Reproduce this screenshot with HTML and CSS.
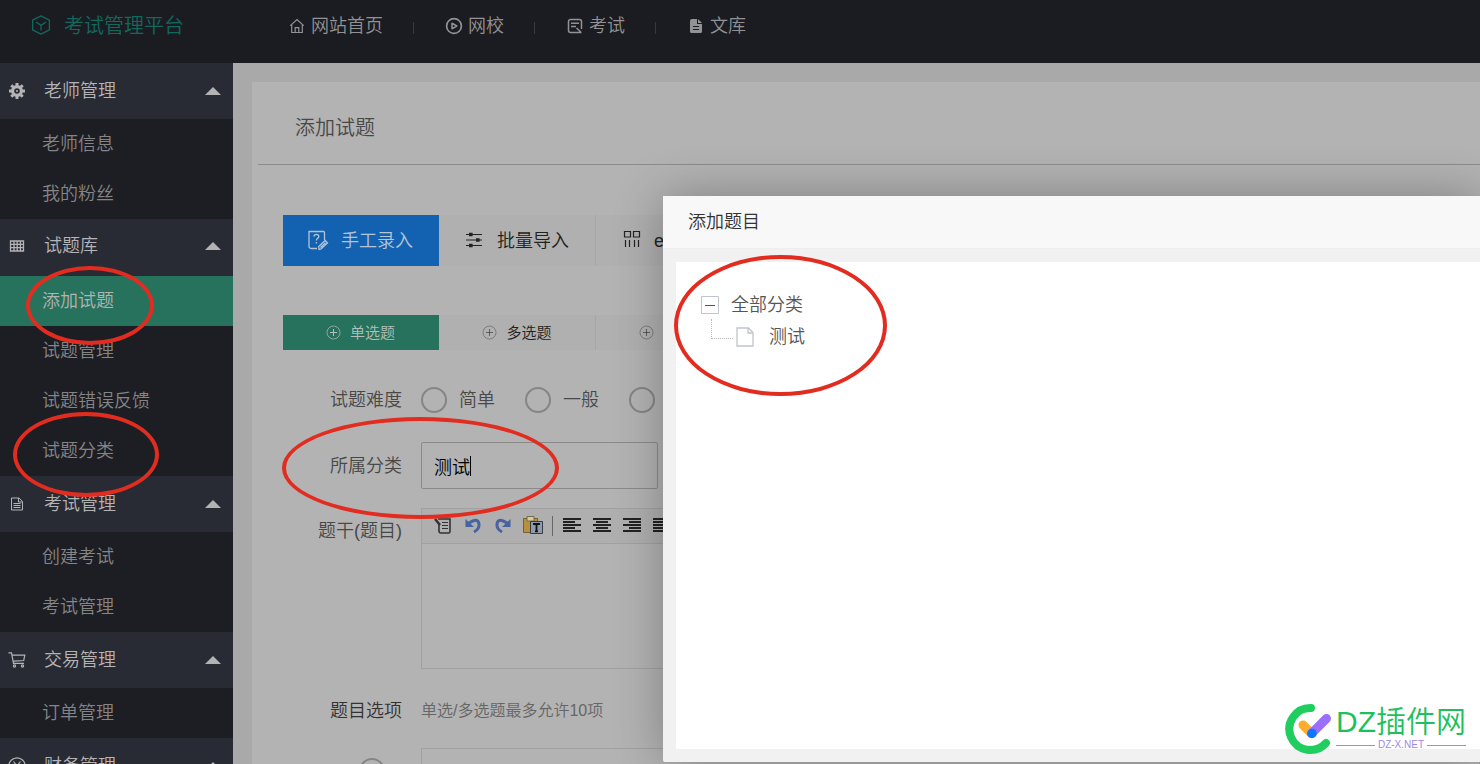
FILE: index.html
```html
<!DOCTYPE html>
<html lang="zh-CN">
<head>
<meta charset="utf-8">
<title>考试管理平台</title>
<link rel="stylesheet" href="styles.css">
</head>
<body>
<header class="topbar">
  <a class="brand" href="#">
    <svg width="20" height="20" viewBox="0 0 20 20" fill="none" stroke="currentColor" stroke-width="1.3" stroke-linejoin="round"><path d="M10 .8 18.4 5.2v9.6L10 19.2 1.6 14.8V5.2zM5 7l5 3.4L15 7M10 10.4v5"/></svg>
    <span>考试管理平台</span>
  </a>
  <nav class="topnav">
    <a href="#"><svg width="18" height="18" viewBox="0 0 18 18" fill="none" stroke="currentColor" stroke-width="1.2"><path d="M2.300 8.600 9 2.500l6.700 6.100M3.700 7.700v7.800h10.600V7.700M7.200 15.500v-4.800h3.600v4.800"/></svg>网站首页</a>
    <a href="#"><svg width="18" height="18" viewBox="0 0 18 18" fill="none" stroke="currentColor" stroke-width="1.7"><circle cx="9" cy="9" r="7.4"/><path d="M7 6.2v5.6L11.8 9z" stroke-linejoin="round" stroke-width="1.5"/></svg>网校</a>
    <a href="#"><svg width="18" height="18" viewBox="0 0 18 18" fill="none" stroke="currentColor" stroke-width="1.5"><path d="M10 15.500H4.500a2 2 0 0 1-2-2v-9a2 2 0 0 1 2-2h9a2 2 0 0 1 2 2V12M5 6.300h8M5 9.600h5M10.500 11l4.500 4.300M10 15.500h5.500"/></svg>考试</a>
    <a href="#"><svg width="18" height="18" viewBox="0 0 18 18"><path fill="currentColor" d="M5 2h5v5h5v7.500a1.500 1.500 0 0 1-1.500 1.500h-9A1.500 1.500 0 0 1 3 14.500V4a2 2 0 0 1 2-2zm6 0 4 4h-4z"/><path stroke="#1b1c21" d="M6 9.500h6M6 12.500h6"/></svg>文库</a>
  </nav>
</header>

<div class="shell">
  <aside class="sidebar">
    <button class="group" type="button"><svg width="18" height="18" viewBox="0 0 18 18" fill="none" stroke="currentColor"><circle cx="9" cy="9" r="4.400" stroke-width="3.200"/><path stroke-width="3" d="M9 1v3M9 14v3M1 9h3M14 9h3M3.300 3.300l2 2M12.700 12.700l2 2M3.300 14.700l2-2M12.700 5.300l2-2"/><circle cx="9" cy="9" r="1" fill="currentColor" stroke="none"/></svg><span>老师管理</span></button>
    <a class="item" href="#">老师信息</a>
    <a class="item" href="#">我的粉丝</a>
    <button class="group group-open" type="button"><svg width="18" height="18" viewBox="0 0 18 18" fill="none" stroke="currentColor" stroke-width="1.300"><path d="M2.500 4h13v10h-13zM2.500 7.300h13M2.500 10.600h13M6 4v10M9.200 4v10M12.400 4v10"/></svg><span>试题库</span></button>
    <a class="item item-active" href="#">添加试题</a>
    <a class="item" href="#">试题管理</a>
    <a class="item" href="#">试题错误反馈</a>
    <a class="item" href="#">试题分类</a>
    <button class="group" type="button"><svg width="18" height="18" viewBox="0 0 18 18" fill="none" stroke="currentColor"><path d="M3.500 3h7.500l3.500 3.500V15h-11zM10.500 3v4h4M5.500 8.500h7M5.500 10.500h7M5.500 12.500h7"/></svg><span>考试管理</span></button>
    <a class="item" href="#">创建考试</a>
    <a class="item" href="#">考试管理</a>
    <button class="group" type="button"><svg width="18" height="18" viewBox="0 0 18 18" fill="none" stroke="currentColor" stroke-width="1.200"><path d="M.500 1.800h3l2 10.500H16M4 4.200h12.800L15.700 9.500l-10.500.700"/><circle cx="6.500" cy="15" r="1.100"/><circle cx="14.500" cy="15" r="1.100"/></svg><span>交易管理</span></button>
    <a class="item" href="#">订单管理</a>
    <button class="group" type="button"><svg width="18" height="18" viewBox="0 0 18 18" fill="none" stroke="currentColor" stroke-width="1.200"><circle cx="9" cy="9" r="8.200"/><path d="M5.500 4.500 9 9l3.500-4.500M9 9v5M6 9.500h6M6 12h6"/></svg><span>财务管理</span></button>
  </aside>

  <main class="main">
    <section class="card">
      <h1 class="card-title">添加试题</h1>
      <div class="card-body">
        <div class="tabs">
          <button class="tab tab-on" type="button"><svg width="22" height="22" viewBox="0 0 22 22" fill="none" stroke="currentColor" stroke-width="1.300"><path d="M9 18.500H3a2 2 0 0 1-2-2V1.500h14.500a1 1 0 0 1 1 1V10M6 6.500q0-2.200 2.400-2.200t2.400 2.200c0 1.800-2.400 1.800-2.400 4M8.400 12v1.500M11 19.500l-.300-3 6.500-6 2.300 2.500-6.500 6zM12.500 17.500l5-4.700"/></svg>手工录入</button>
          <button class="tab" type="button"><svg width="22" height="22" viewBox="0 0 22 22" fill="currentColor" stroke="currentColor" stroke-width="1.200"><path d="M2 4.500h16M2 10h16M2 15.500h16"/><path stroke="none" d="M5 2.700h3.600v3.600H5zM12 8.200h3.600v3.600H12zM5 13.700h3.600v3.600H5z"/></svg>批量导入</button>
          <button class="tab" type="button"><svg width="22" height="22" viewBox="0 0 22 22" fill="none" stroke="currentColor" stroke-width="1.200"><path d="M3.500 1.500h6v5.500h-6zM12.500 1.500h6v5.500h-6zM4.500 10v7M8.500 10v7M13.500 10v7M17.500 10v7"/></svg>excel导入</button>
        </div>
        <div class="tabs tabs-small">
          <button class="tab tab-on" type="button"><svg width="15" height="15" viewBox="0 0 15 15" fill="none" stroke="currentColor"><circle cx="7.500" cy="7.500" r="6.500" opacity=".7"/><path d="M7.500 4v7M4 7.500h7"/></svg>单选题</button>
          <button class="tab" type="button"><svg width="15" height="15" viewBox="0 0 15 15" fill="none" stroke="currentColor"><circle cx="7.500" cy="7.500" r="6.500" opacity=".35"/><path d="M7.500 4v7M4 7.500h7" opacity=".55"/></svg>多选题</button>
          <button class="tab" type="button"><svg width="15" height="15" viewBox="0 0 15 15" fill="none" stroke="currentColor"><circle cx="7.500" cy="7.500" r="6.500" opacity=".35"/><path d="M7.500 4v7M4 7.500h7" opacity=".55"/></svg>判断题</button>
        </div>

        <form class="form">
          <div class="row">
            <span class="label">试题难度</span>
            <div class="radios">
              <label><input type="radio" name="level">简单</label>
              <label><input type="radio" name="level">一般</label>
              <label><input type="radio" name="level">困难</label>
            </div>
          </div>
          <div class="row">
            <label class="label" for="category">所属分类</label>
            <div class="field"><input class="text" id="category" type="text" value="测试"><i class="caret"></i></div>
          </div>
          <div class="row row-editor">
            <label class="label" for="stem">题干(题目)</label>
            <div class="editor">
              <div class="tools">
                <button type="button" aria-label="源代码"><svg width="20" height="20" viewBox="0 0 20 20" fill="none" stroke="#333" stroke-width="1.600"><path d="M5 3h12v12.500q0 1.500-1.500 1.500H8q-2 0-2-2V8"/><path stroke-width="2.500" d="m2 3 5 6"/><path stroke-width="1" d="M9 6.500h6M9 9.500h6M9 12.500h6"/></svg></button>
                <button type="button" aria-label="撤销"><svg width="20" height="20" viewBox="0 0 20 20"><path fill="none" stroke="#4763a0" stroke-width="3" d="M6 7q9-6 10 1 .500 5-5 8"/><path fill="#4763a0" d="M2.500 3v8H11z"/></svg></button>
                <button type="button" aria-label="重做"><svg width="20" height="20" viewBox="0 0 20 20"><path fill="none" stroke="#4763a0" stroke-width="3" d="M14 7Q5 1 4 8q-.500 5 5 8"/><path fill="#4763a0" d="M17.500 3v8H9z"/></svg></button>
                <button type="button" aria-label="粘贴为文本"><svg width="20" height="20" viewBox="0 0 20 20"><path fill="#b6903c" stroke="#7b6128" d="M.500 2.500h14v14H.500z"/><path fill="#dacb91" stroke="#6f6a58" d="M4 .500h7V5H4z"/><path fill="#8f9cab" stroke="#353b44" d="M7.500 5.500h12v12h-12z"/><path stroke="#111" stroke-width="1.800" d="M10 8h7M13.500 8v7.500M12 15.300h3"/></svg></button>
                <span class="split"></span>
                <button type="button" aria-label="左对齐"><svg width="20" height="20" viewBox="0 0 20 20" stroke="#222" stroke-width="2"><path d="M1 3h18M1 6h12M1 9h18M1 12h12M1 15h18"/></svg></button>
                <button type="button" aria-label="居中"><svg width="20" height="20" viewBox="0 0 20 20" stroke="#222" stroke-width="2"><path d="M1 3h18M4 6h12M1 9h18M4 12h12M1 15h18"/></svg></button>
                <button type="button" aria-label="右对齐"><svg width="20" height="20" viewBox="0 0 20 20" stroke="#222" stroke-width="2"><path d="M1 3h18M7 6h12M1 9h18M7 12h12M1 15h18"/></svg></button>
                <button type="button" aria-label="两端对齐"><svg width="20" height="20" viewBox="0 0 20 20" stroke="#222" stroke-width="2"><path d="M1 3h18M1 6h18M1 9h18M1 12h18M1 15h18"/></svg></button>
              </div>
              <textarea id="stem"></textarea>
            </div>
          </div>
          <div class="row row-hint">
            <span class="label">题目选项</span>
            <span class="hint">单选/多选题最多允许10项</span>
          </div>
          <div class="row row-option">
            <span class="label"><input type="radio" name="answer" aria-label="正确答案"></span>
            <textarea class="option" aria-label="选项内容"></textarea>
          </div>
        </form>
      </div>
    </section>
  </main>
</div>

<section class="dialog" role="dialog" aria-label="添加题目">
  <h2 class="dialog-title">添加题目</h2>
  <div class="dialog-body">
    <div class="tree">
      <div class="node"><svg width="18" height="18" viewBox="0 0 18 18" fill="none"><path stroke="#c0c4cc" d="M.500.500h17v17H.500z"/><path stroke="#555" d="M4 9.500h10"/></svg><a href="#">全部分类</a></div>
      <div class="node child"><svg width="18" height="20" viewBox="0 0 18 20" fill="none" stroke="#c0c4cc" stroke-width="1.300"><path d="M1 1h11.500L17 5.500V19H1zM12 1v5h5"/></svg><a href="#">测试</a></div>
    </div>
  </div>
</section>

<div class="ring ring-add"></div>
<div class="ring ring-class"></div>
<div class="ring ring-field"></div>
<div class="ring ring-tree"></div>

<div class="mark">
  <svg width="50" height="52" viewBox="0 0 50 52" fill="none" stroke-linecap="round"><path stroke="#1fce5f" stroke-width="8" d="M26 5A21 21 0 1 0 41 40"/><path stroke="#ffab2e" stroke-width="9" d="m18 22 8 8"/><path stroke="#9a70fb" stroke-width="9" d="m26.500 30.500 15-15"/><circle cx="27" cy="30.500" r="4.700" fill="#0a77ff"/></svg>
  <div class="mark-text">
    <strong>DZ插件网</strong>
    <span>DZ-X.NET</span>
  </div>
</div>
</body>
</html>
```
FILE: styles.css
```css
* { box-sizing: border-box; }
body {
  margin: 0;
  height: 100vh;
  display: flex;
  flex-direction: column;
  overflow: hidden;
  position: relative;
  background: #a9a9a9;
  color: #484848;
  font: 350 18px/26px "Liberation Sans", "Noto Sans CJK SC", sans-serif;
}
a { color: inherit; text-decoration: none; }
button, input, textarea { font: inherit; color: inherit; margin: 0; }
button { border: 0; background: none; padding: 0; }
svg { flex: none; display: block; }

.topbar {
  flex: none;
  height: 63px;
  padding: 0 0 12px 31px;
  display: flex;
  align-items: center;
  background: #1b1c21;
  color: #929294;
}
.brand { display: flex; gap: 13px; width: 257px; color: #11695e; font-size: 20px; }
.brand svg { margin-top: 2px; }
.topnav { display: flex; }
.topnav a { display: flex; align-items: center; gap: 5px; }
.topnav a + a::before {
  content: "";
  width: 1px;
  height: 12px;
  margin: 4px 26px 0 30px;
  background: #39393f;
}

.shell { flex: 1; min-height: 0; display: flex; }
.sidebar { flex: none; width: 233px; overflow: hidden; background: #1d1e23; }
.group {
  width: 100%;
  height: 56px;
  padding: 0 12px 1px 8px;
  display: flex;
  align-items: center;
  gap: 18px;
  background: #292b34;
  color: #b4b4b6;
  text-align: left;
}
.group-open { height: 57px; padding-bottom: 3px; }
.group::after {
  content: "";
  margin-left: auto;
  border: 8px solid transparent;
  border-top-width: 0;
  border-bottom-color: #b3b3b3;
}
.item { display: block; padding: 12px 0 12px 42px; color: #858587; }
.item-active { background: #27725c; color: #b3b3b3; }

.main { flex: 1; min-width: 0; padding: 19px 0 0 19px; overflow: hidden; }
.card { height: 100%; overflow: hidden; background: #b3b3b3; }
.card-title {
  margin: 0 0 0 6px;
  padding: 33px 0 23px 37px;
  border-bottom: 1px solid #8c8c8c;
  font-size: 20px;
  font-weight: 350;
}
.card-body { padding: 50px 0 0 31px; }
.tabs { display: flex; height: 51px; background: #b0b0b0; color: #222; }
.tab {
  min-width: 157px;
  padding: 0 26px 0 25px;
  display: flex;
  align-items: center;
  gap: 11px;
  border-right: 1px solid #a6a6a6;
}
.tab-on { min-width: 156px; background: #1362b2; border-color: #1362b2; color: #b3c4d4; }
.tabs .tab-on { padding-right: 25px; }
.tabs-small { height: 35px; margin-top: 49px; font-size: 15px; }
.tabs-small .tab { padding: 0; justify-content: center; gap: 9px; }
.tabs-small .tab-on { padding: 0; background: #27725c; border-color: #27725c; color: #b3bfbb; }

.form { display: flex; flex-direction: column; padding-top: 37px; }
.row { display: flex; align-items: center; gap: 19px; margin-bottom: 29px; }
.label { flex: none; width: 119px; text-align: right; }
.radios { display: flex; gap: 30px; }
.radios label { display: flex; align-items: center; gap: 12px; white-space: nowrap; }
input[type="radio"] {
  appearance: none;
  width: 26px;
  height: 26px;
  border: 2px solid #858585;
  border-radius: 50%;
}
.field { position: relative; width: 237px; }
.text {
  display: block;
  width: 100%;
  height: 47px;
  padding: 0 12px;
  border: 1px solid #8a8a8a;
  border-radius: 2px;
  background: none;
  color: #000;
}
.caret { position: absolute; left: 49px; top: 14px; width: 1px; height: 20px; background: #000; }
.row-editor { align-items: flex-start; margin-top: -10px; }
.row-editor .label { padding-top: 10px; }
.editor { flex: 1; height: 161px; display: flex; flex-direction: column; border: 1px solid #a1a1a1; border-right: 0; }
.tools { display: flex; align-items: center; height: 35px; padding-left: 6px; border-bottom: 1px solid #a1a1a1; background: #afafaf; }
.tools button { display: grid; place-items: center; width: 30px; height: 30px; }
.split { width: 1px; height: 20px; margin: 0 4px; background: #666; }
textarea { display: block; flex: 1; border: 0; background: none; resize: none; }
.row-hint { margin-bottom: 24px; }
.row-hint .label { color: #333; }
.hint { color: #666; font-size: 16px; }
.row-option { align-items: flex-start; }
.row-option .label { padding: 10px 17px 0 0; }
.option { height: 80px; border: 1px solid #a1a1a1; }

.dialog {
  position: absolute;
  top: 196px;
  right: 0;
  bottom: 2px;
  left: 663px;
  display: flex;
  flex-direction: column;
  border-radius: 2px 0 0 2px;
  background: #f1f1f1;
  box-shadow: 1px 1px 50px rgba(0, 0, 0, .3);
}
.dialog-title {
  margin: 0;
  padding: 13px 25px;
  border-bottom: 1px solid #eee;
  background: #f8f8f8;
  color: #333;
  font-size: 18px;
  font-weight: 350;
}
.dialog-body { flex: 1; padding: 13px 0 13px 13px; }
.tree { height: 100%; padding: 27px 25px; background: #fff; color: #555; }
.node { display: flex; align-items: center; gap: 12px; height: 32px; }
.child { position: relative; margin-left: 35px; gap: 15px; }
.child::before {
  content: "";
  position: absolute;
  left: -25px;
  top: -2px;
  width: 21px;
  height: 19px;
  border: dotted #b8b8b8;
  border-width: 0 0 1px 1px;
}

.ring { position: absolute; border: 4px solid #e22c20; border-radius: 50%; pointer-events: none; }
.ring-add { left: 26px; top: 266px; width: 128px; height: 79px; }
.ring-class { left: 13px; top: 412px; width: 146px; height: 85px; }
.ring-field { left: 282px; top: 417px; width: 277px; height: 102px; }
.ring-tree { left: 674px; top: 255px; width: 213px; height: 141px; }

.mark { position: absolute; right: 14px; bottom: 9px; display: flex; gap: 1px; }
.mark-text { display: flex; flex-direction: column; }
.mark-text strong { color: #1fbf5b; font-size: 30px; font-weight: 350; line-height: 37px; }
.mark-text span { display: flex; align-items: center; gap: 3px; color: #a287e8; font-size: 10px; line-height: 10px; }
.mark-text span::before, .mark-text span::after { content: ""; flex: 1; height: 1px; background: #a287e8; }
```
